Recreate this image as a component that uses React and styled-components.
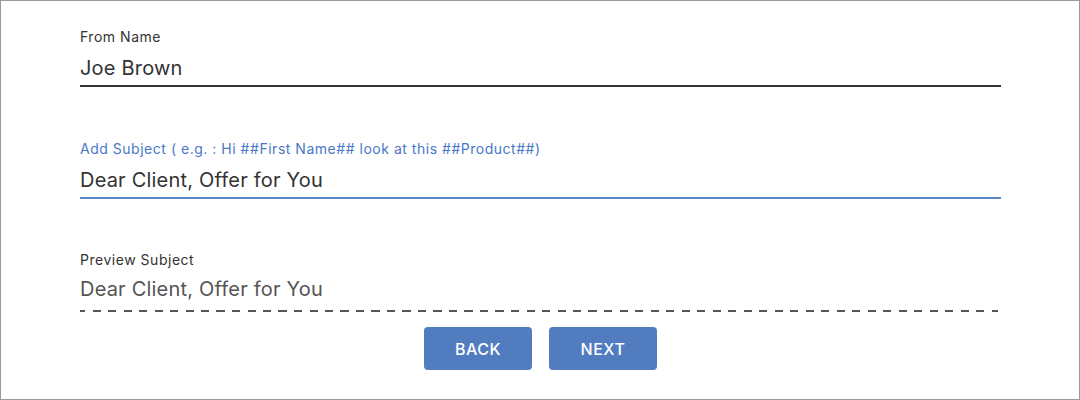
import React from "react";
import styled, { createGlobalStyle } from "styled-components";

const GlobalStyle = createGlobalStyle`
  html, body {
    margin: 0;
    padding: 0;
    background: #ffffff;
  }
  * {
    box-sizing: border-box;
  }
`;

const Frame = styled.div`
  width: 1080px;
  height: 400px;
  border: 1px solid #9a9a9a;
  background: #fff;
  font-family: Inter, "Open Sans", sans-serif;
  padding: 28px 78px 0 79px;
  display: flex;
  flex-direction: column;
`;

const Field = styled.div`
  display: flex;
  flex-direction: column;
  margin-bottom: ${(props) => props.gap || "0px"};
`;

const Label = styled.label`
  font-size: 14px;
  line-height: 16px;
  color: ${(props) => (props.active ? "#4a78c8" : "#333333")};
  letter-spacing: 0.52px;
`;

const Input = styled.input`
  border: none;
  outline: none;
  padding: 0;
  margin-top: 6px;
  height: 36px;
  width: 100%;
  font-family: inherit;
  font-size: 20px;
  letter-spacing: 0.2px;
  color: #333333;
  background: transparent;
  border-bottom: 2px solid ${(props) => props.line || "#333333"};
`;

const Preview = styled.div`
  margin-top: 6px;
  height: 38px;
  font-size: 20px;
  letter-spacing: 0.2px;
  line-height: 30px;
  color: #555555;
  background-image: repeating-linear-gradient(
    to right,
    #555555 0,
    #555555 8px,
    transparent 8px,
    transparent 15.5px
  );
  background-size: 100% 2px;
  background-repeat: no-repeat;
  background-position: -3px 36px;
`;

const Actions = styled.div`
  display: flex;
  justify-content: center;
  gap: 17px;
  margin-top: 15px;
`;

const Button = styled.button`
  width: 108px;
  height: 43px;
  border: none;
  border-radius: 4px;
  background: #527cc0;
  color: #ffffff;
  font-family: inherit;
  font-size: 16px;
  font-weight: 500;
  letter-spacing: 0.5px;
  text-transform: uppercase;
  cursor: pointer;
`;

export default function App() {
  return (
    <>
      <GlobalStyle />
      <Frame>
        <Field gap="54px">
          <Label>From Name</Label>
          <Input defaultValue="Joe Brown" />
        </Field>
        <Field gap="53px">
          <Label active>
            Add Subject ( e.g. : Hi ##First Name## look at this ##Product##)
          </Label>
          <Input defaultValue="Dear Client, Offer for You" line="#5a86cc" />
        </Field>
        <Field>
          <Label>Preview Subject</Label>
          <Preview>Dear Client, Offer for You</Preview>
        </Field>
        <Actions>
          <Button>Back</Button>
          <Button>Next</Button>
        </Actions>
      </Frame>
    </>
  );
}
